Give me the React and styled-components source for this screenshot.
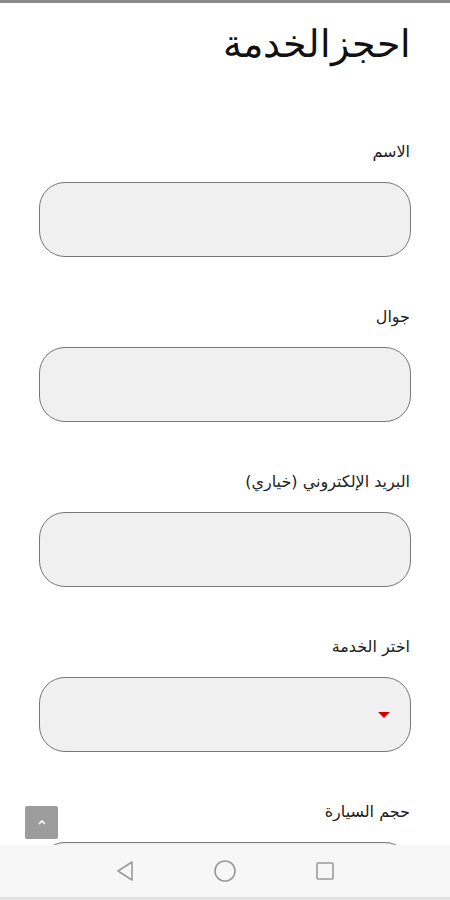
import React from 'react';
import styled, { createGlobalStyle } from 'styled-components';

const Global = createGlobalStyle`
  html, body { margin: 0; padding: 0; background: #fff; }
  body { font-family: "DejaVu Sans", "Noto Sans", sans-serif; overflow: hidden; }
`;

const Page = styled.div`
  position: relative;
  width: 450px;
  height: 900px;
  overflow: hidden;
  border-top: 3px solid #8a8a8a;
  box-sizing: border-box;
  direction: rtl;
`;

const Content = styled.div`
  padding: 18px 39px 0 39px;
  display: flex;
  flex-direction: column;
`;

const Title = styled.h1`
  margin: 0;
  font-size: 38px;
  font-weight: 200;
  color: #111;
  line-height: 46px;
`;

const Form = styled.form`
  margin-top: 73px;
  display: flex;
  flex-direction: column;
  gap: 48px;
`;

const Field = styled.div`
  display: flex;
  flex-direction: column;
  gap: 18px;
`;

const Label = styled.label`
  font-size: 16px;
  line-height: 24px;
  color: #222;
  padding-right: 1px;
`;

const Box = styled.div`
  position: relative;
  height: 75px;
  box-sizing: border-box;
  border: 1px solid #777;
  border-radius: 26px;
  background: #f0f0f0;
`;

const Arrow = styled.span`
  position: absolute;
  right: 20px;
  top: 34px;
  width: 0;
  height: 0;
  border-left: 6px solid transparent;
  border-right: 6px solid transparent;
  border-top: 6px solid #d40000;
`;

const NavBar = styled.nav`
  position: absolute;
  left: 0;
  right: 0;
  bottom: 0;
  height: 52px;
  background: #f7f7f7;
  border-bottom: 3px solid #e2e2e2;
  display: flex;
  justify-content: center;
  align-items: center;
  gap: 72px;
  direction: ltr;
`;

const NavIcon = styled.svg`
  width: 28px;
  height: 28px;
  fill: none;
  stroke: #9a9a9a;
  stroke-width: 1.6;
`;

const TopButton = styled.button`
  position: absolute;
  left: 25px;
  bottom: 61px;
  width: 33px;
  height: 33px;
  border: none;
  border-radius: 2px;
  background: #9c9c9c;
  display: flex;
  align-items: center;
  justify-content: center;
  padding: 0;
`;

const fields = [
  { label: 'الاسم' },
  { label: 'جوال' },
  { label: 'البريد الإلكتروني (خياري)' },
  { label: 'اختر الخدمة', select: true },
  { label: 'حجم السيارة' },
];

export default function App() {
  return (
    <Page>
      <Global />
      <Content>
        <Title>احجزالخدمة</Title>
        <Form>
          {fields.map((f) => (
            <Field key={f.label}>
              <Label>{f.label}</Label>
              <Box>{f.select && <Arrow />}</Box>
            </Field>
          ))}
        </Form>
      </Content>
      <TopButton>
        <svg width="10" height="7" viewBox="0 0 10 7" fill="none" stroke="#fff" strokeWidth="1.6">
          <path d="M2 5 L5 2 L8 5" />
        </svg>
      </TopButton>
      <NavBar>
        <NavIcon viewBox="0 0 28 28">
          <path d="M21 5 L7 14 L21 23 Z" strokeLinejoin="round" />
        </NavIcon>
        <NavIcon viewBox="0 0 28 28">
          <circle cx="14" cy="14" r="10" />
        </NavIcon>
        <NavIcon viewBox="0 0 28 28">
          <rect x="6" y="6" width="16" height="16" rx="1" />
        </NavIcon>
      </NavBar>
    </Page>
  );
}
